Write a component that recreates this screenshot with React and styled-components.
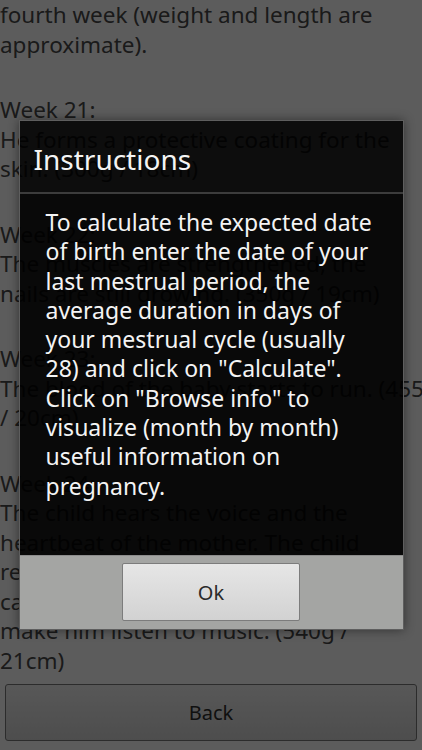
import React from "react";
import styled, { createGlobalStyle } from "styled-components";

const GlobalStyle = createGlobalStyle`
  html, body {
    margin: 0;
    padding: 0;
    background: #000;
  }
  * {
    box-sizing: border-box;
  }
`;

const weeks = [
  {
    lines: ["fourth week (weight and length are", "approximate)."],
  },
  {
    lines: [
      "Week 21:",
      "He forms a protective coating for the",
      "skin. (300g / 18cm)",
    ],
  },
  {
    lines: [
      "Week 22:",
      "The muscles are strengthened, the",
      "nails are still growing. (350g / 19cm)",
    ],
  },
  {
    lines: [
      "Week 23:",
      "The blood of the baby starts to run. (455g",
      "/ 20cm)",
    ],
  },
  {
    lines: [
      "Week 24:",
      "The child hears the voice and the",
      "heartbeat of the mother. The child",
      "reacts to the sounds, so you",
      "can talk to him, sing for him or",
      "make him listen to music. (540g /",
      "21cm)",
    ],
  },
];

const instructions = [
  "To calculate the expected date",
  "of birth enter the date of your",
  "last mestrual period, the",
  "average duration in days of",
  "your mestrual cycle (usually",
  '28) and click on "Calculate".',
  'Click on "Browse info" to',
  "visualize (month by month)",
  "useful information on",
  "pregnancy.",
];

export default function App() {
  return (
    <Screen>
      <GlobalStyle />
      <InfoPage>
        <Article>
          {weeks.map((week, i) => (
            <Paragraph key={i}>
              {week.lines.map((line, j) => (
                <Line key={j}>{line}</Line>
              ))}
            </Paragraph>
          ))}
        </Article>
        <BackButton>Back</BackButton>
      </InfoPage>

      <Dim>
        <Dialog>
          <DialogTitle>Instructions</DialogTitle>
          <DialogBody>
            {instructions.map((line, i) => (
              <Line key={i}>{line}</Line>
            ))}
          </DialogBody>
          <DialogButtons>
            <OkButton>Ok</OkButton>
          </DialogButtons>
        </Dialog>
      </Dim>
    </Screen>
  );
}

const Screen = styled.div`
  position: relative;
  width: 422px;
  height: 750px;
  overflow: hidden;
  background: #ffffff;
  font-family: "Noto Sans", "Open Sans", "DejaVu Sans", sans-serif;
`;

const InfoPage = styled.div`
  display: flex;
  flex-direction: column;
  height: 100%;
`;

const Article = styled.div`
  display: flex;
  flex-direction: column;
  gap: 36px;
  color: #4a4a4a;
  font-size: 22.5px;
  line-height: 29.5px;
`;

const Paragraph = styled.div`
  display: flex;
  flex-direction: column;
`;

const Line = styled.div`
  white-space: nowrap;
`;

const BackButton = styled.button`
  margin: 9px 5px 0;
  height: 57px;
  border: 1px solid #7a7a7a;
  border-radius: 3px;
  background: linear-gradient(#f2f2f2, #d6d6d6);
  color: #2e2e2e;
  font-family: "Noto Sans", "Open Sans", sans-serif;
  font-size: 20px;
`;

const Dim = styled.div`
  position: absolute;
  inset: 0;
  display: flex;
  align-items: center;
  justify-content: center;
  background: rgba(0, 0, 0, 0.64);
`;

const Dialog = styled.div`
  display: flex;
  flex-direction: column;
  width: 385px;
  height: 510px;
  border: 1px solid #5e5e5e;
  box-shadow: 0 0 10px rgba(0, 0, 0, 0.45);
`;

const DialogTitle = styled.div`
  height: 73px;
  display: flex;
  align-items: center;
  padding: 4px 14px 0;
  background: rgba(0, 0, 0, 0.86);
  border-bottom: 2px solid #3c3c3c;
  color: #f4f4f4;
  font-size: 28px;
`;

const DialogBody = styled.div`
  flex: 1;
  padding: 14px 0 0 26px;
  background: rgba(0, 0, 0, 0.9);
  color: #f4f4f4;
  font-size: 23px;
  line-height: 29.3px;
`;

const DialogButtons = styled.div`
  height: 74px;
  display: flex;
  justify-content: center;
  padding-top: 7px;
  background: #a4a5a3;
  border-top: 1px solid #8c8c8c;
`;

const OkButton = styled.button`
  width: 178px;
  height: 58px;
  border: 1px solid #7c7c7c;
  border-radius: 2px;
  background: linear-gradient(#e6e6e6, #d2d2d2);
  color: #2a2a2a;
  font-family: "Noto Sans", "Open Sans", sans-serif;
  font-size: 20px;
`;
